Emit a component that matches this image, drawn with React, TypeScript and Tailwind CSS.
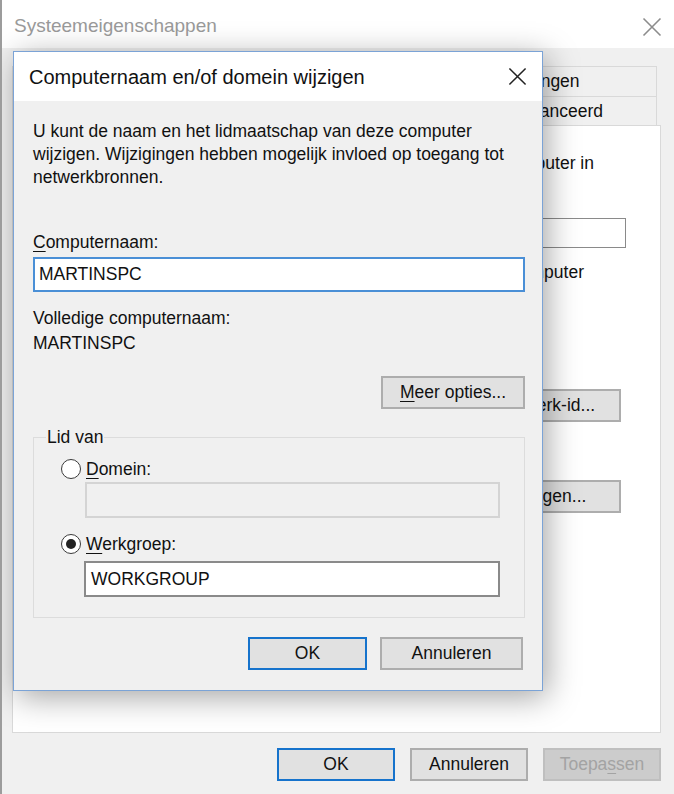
import React from "react";

const CloseIcon = ({ className, size }: { className?: string; size: number }) => (
  <svg width={size} height={size} viewBox="0 0 20 20" className={className}>
    <path d="M1.5 1.5 L18.5 18.5 M18.5 1.5 L1.5 18.5" stroke="currentColor" strokeWidth="1.6" fill="none" />
  </svg>
);

const Key = ({ children }: { children: React.ReactNode }) => (
  <span className="underline decoration-1 underline-offset-[3px]">{children}</span>
);

const Button = ({
  children,
  primary,
  disabled,
  className = "",
}: {
  children: React.ReactNode;
  primary?: boolean;
  disabled?: boolean;
  className?: string;
}) => {
  let tone = "border-[#adadad] bg-[#e1e1e1] text-[#111]";
  if (primary) tone = "border-[#1673cc] bg-[#e1e1e1] text-[#111]";
  if (disabled) tone = "border-[#bfbfbf] bg-[#cccccc] text-[#a3a3a3]";
  return (
    <div className={`flex h-[33px] items-center justify-center border-2 ${tone} ${className}`}>
      {children}
    </div>
  );
};

const Radio = ({ checked }: { checked?: boolean }) => (
  <div className="flex h-[20px] w-[20px] items-center justify-center rounded-full border-[1.5px] border-[#3a3a3a] bg-white">
    {checked && <div className="h-[10px] w-[10px] rounded-full bg-[#222]" />}
  </div>
);

// background window: only its right edge peeks out from under the dialog
const SystemProperties = () => (
  <div className="flex h-full flex-col">
    <div className="flex h-[48px] items-center justify-between bg-white pl-[12px] pr-[12px] pt-[5px]">
      <span className="text-[19px] text-[#9a9a9a]">Systeemeigenschappen</span>
      <CloseIcon size={20} className="text-[#8c8c8c]" />
    </div>

    <div className="flex flex-1 flex-col pl-[10px] pr-[13px]">
      <div className="mt-[18px] flex h-[30px] pr-[4px]">
        <div className="flex-1 border border-b-0 border-[#d9d9d9] bg-[#f0f0f0]" />
        <div className="flex w-[256px] items-center justify-center border border-b-0 border-l-0 border-[#d9d9d9] bg-[#f0f0f0]">
          Verbindingen
        </div>
      </div>
      <div className="flex h-[29px] pr-[4px]">
        <div className="flex-1 border border-b-0 border-[#d9d9d9] bg-white" />
        <div className="flex-1 border border-b-0 border-l-0 border-[#d9d9d9] bg-[#f0f0f0]" />
        <div className="flex w-[212px] items-center justify-center border border-b-0 border-l-0 border-[#d9d9d9] bg-[#f0f0f0]">
          Geavanceerd
        </div>
      </div>

      <div className="flex h-[608px] flex-col items-end border border-[#d9d9d9] bg-white">
        <p className="mr-[66px] mt-[26px] whitespace-nowrap leading-[22px]">computer in</p>
        <div className="mr-[34px] mt-[44px] h-[30px] w-[420px] border border-[#8a8a8a] bg-white" />
        <p className="mr-[76px] mt-[13px] whitespace-nowrap leading-[22px]">deze computer</p>
        <Button className="mr-[39px] mt-[106px] w-[150px]">Netwerk-id...</Button>
        <Button className="mr-[39px] mt-[58px] w-[150px]">Wijzigen...</Button>
      </div>

      <div className="mt-[15px] flex justify-end gap-[15px]">
        <Button primary className="w-[118px]">OK</Button>
        <Button className="w-[118px]">Annuleren</Button>
        <Button disabled className="w-[118px]">
          Toepa<Key>s</Key>sen
        </Button>
      </div>
    </div>
  </div>
);

const ChangeNameDialog = () => (
  <div className="absolute left-[11px] top-[51px] flex h-[640px] w-[530px] flex-col border border-[#7ba3d6] bg-[#f0f0f0] shadow-[4px_6px_30px_rgba(0,0,0,0.36)]">
    <div className="flex h-[49px] items-center justify-between bg-white pl-[15px] pr-[15px]">
      <span className="text-[20px] text-[#111]">Computernaam en/of domein wijzigen</span>
      <CloseIcon size={19} className="text-[#222]" />
    </div>

    <div className="flex flex-1 flex-col pl-[19px] pr-[17px] pt-[19px]">
      <p className="leading-[23px]">
        U kunt de naam en het lidmaatschap van deze computer
        <br />
        wijzigen. Wijzigingen hebben mogelijk invloed op toegang tot
        <br />
        netwerkbronnen.
      </p>

      <label className="mt-[42px] leading-[22px]">
        <Key>C</Key>omputernaam:
      </label>
      <div className="mt-[4px] flex h-[35px] items-center border-2 border-[#4a8fd6] bg-white pl-[4px]">
        MARTINSPC
      </div>

      <p className="mt-[15px] leading-[22px]">Volledige computernaam:</p>
      <p className="mt-[3px] leading-[22px]">MARTINSPC</p>

      <Button className="mt-[22px] w-[144px] self-end">
        <Key>M</Key>eer opties...
      </Button>

      <fieldset className="mt-[17px] border border-[#dcdcdc] pb-[20px]">
        <legend className="ml-[12px] px-[1px] leading-[22px]">Lid van</legend>
        <div className="mt-[10px] flex items-center gap-[5px] pl-[27px] leading-[22px]">
          <Radio />
          <span>
            <Key>D</Key>omein:
          </span>
        </div>
        <div className="ml-[51px] mr-[24px] mt-[2px] h-[36px] border-2 border-[#d4d4d4] bg-[#f0f0f0]" />
        <div className="mt-[15px] flex items-center gap-[5px] pl-[27px] leading-[22px]">
          <Radio checked />
          <span>
            <Key>W</Key>erkgroep:
          </span>
        </div>
        <div className="ml-[50px] mr-[24px] mt-[6px] flex h-[36px] items-center border-2 border-[#8a8a8a] bg-white pl-[5px]">
          WORKGROUP
        </div>
      </fieldset>

      <div className="mt-[19px] flex justify-end gap-[13px] pr-[2px]">
        <Button primary className="w-[119px]">OK</Button>
        <Button className="w-[143px]">Annuleren</Button>
      </div>
    </div>
  </div>
);

export default function App() {
  return (
    <div className="relative h-[794px] w-[674px] overflow-hidden border-l-2 border-[#9c9c9c] bg-[#f0f0f0] font-['Liberation_Sans',Arial,sans-serif] text-[17.5px] text-[#111]">
      <SystemProperties />
      <ChangeNameDialog />
    </div>
  );
}
